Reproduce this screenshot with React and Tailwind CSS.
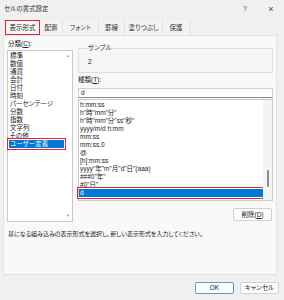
const categories = [
  "標準",
  "数値",
  "通貨",
  "会計",
  "日付",
  "時刻",
  "パーセンテージ",
  "分数",
  "指数",
  "文字列",
  "その他",
  "ユーザー定義",
];

const formats = [
  "h:mm:ss",
  'h"時"mm"分"',
  'h"時"mm"分"ss"秒"',
  "yyyy/m/d h:mm",
  "mm:ss",
  "mm:ss.0",
  "@",
  "[h]:mm:ss",
  'yyyy"年"m"月"d"日"(aaa)',
  '###0"年"',
  '#0"日"',
  "d",
];

const tabs = [
  { label: "表示形式", w: "w-[35px]" },
  { label: "配置", w: "w-[23px]" },
  { label: "フォント", w: "w-[36px]" },
  { label: "罫線", w: "w-[26px]" },
  { label: "塗りつぶし", w: "w-[38px]" },
  { label: "保護", w: "w-[27px]" },
];

export default function App() {
  return (
    <div className="w-[284px] h-[300px] bg-[#f0f0f0] text-[#1b1b1b] text-[6.5px] font-['Liberation_Sans','Noto_Sans_CJK_JP',sans-serif] [font-feature-settings:'palt'] flex flex-col overflow-hidden">
      {/* title bar */}
      <div className="h-[18px] flex items-center">
        <span className="pl-[4px] flex-1 text-[#333]">セルの書式設定</span>
        <span className="w-[26px] text-center text-[7px] text-[#444]">?</span>
        <span className="w-[26px] text-center text-[9px] leading-none text-[#444]">×</span>
      </div>

      {/* tabs */}
      <div className="mt-[2px] h-[15px] flex pl-[5px]">
        {tabs.map((t, i) =>
          i === 0 ? (
            <div
              key={t.label}
              className={`${t.w} h-[15px] flex items-center justify-center bg-[#f9f9f9] border-[1.5px] border-[#e4232f]`}
            >
              {t.label}
            </div>
          ) : (
            <div
              key={t.label}
              className={`${t.w} h-[15px] flex items-center justify-center bg-[#f3f3f3] border-r border-[#e4e4e4] text-[#333]`}
            >
              {t.label}
            </div>
          )
        )}
      </div>

      {/* panel */}
      <div className="ml-[3px] w-[274px] h-[240px] bg-[#f9f9f9] border border-[#e2e2e2] px-[3px] flex flex-col">
        <div className="flex gap-[5px] pt-[3px]">
          {/* left column */}
          <div className="w-[66px] flex flex-col">
            <div className="h-[10px] leading-[10px] pl-[1px]">
              分類(<span className="underline">C</span>):
            </div>
            <div className="mt-[1px] h-[172px] bg-white border border-[#c9c9c9] flex">
              <div className="flex-1 pt-[1px] pl-[1px]">
                {categories.map((c) =>
                  c === "ユーザー定義" ? (
                    <div
                      key={c}
                      className="h-[8px] leading-[8px] pl-[1px] bg-[#0078d7] text-white outline-[1.5px] outline-solid outline-[#e4232f] outline-offset-[1px]"
                    >
                      {c}
                    </div>
                  ) : (
                    <div key={c} className="h-[8px] leading-[8px] pl-[1px]">
                      {c}
                    </div>
                  )
                )}
              </div>
              <div className="w-[8px] flex flex-col justify-between items-center py-[2px] text-[4px] text-[#9a9a9a]">
                <span>▲</span>
                <span>▼</span>
              </div>
            </div>
          </div>

          {/* right column */}
          <div className="flex-1 flex flex-col">
            <fieldset className="mt-[5px] h-[29px] border border-[#dedede] bg-[#f5f5f5] pl-[9px]">
              <legend className="leading-[8px] px-0 text-[#333]">サンプル</legend>
              <div className="mt-[6px] leading-[8px]">2</div>
            </fieldset>
            <div className="mt-[2px] h-[10px] leading-[10px]">
              種類(<span className="underline">T</span>):
            </div>
            <div className="mt-[3px] h-[10px] bg-white border border-[#d0d0d0] border-b-[#8a8a8a] pl-[2px] leading-[8px]">
              d
            </div>
            <div className="mt-[1px] h-[102px] bg-white border border-[#c9c9c9] flex">
              <div className="flex-1 pt-[1px]">
                {formats.map((f) =>
                  f === "d" ? (
                    <div
                      key={f}
                      className="h-[8px] leading-[8px] pl-[1px] bg-[#0078d7] text-white outline-[1.5px] outline-solid outline-[#e4232f] outline-offset-[1.5px]"
                    >
                      {f}
                    </div>
                  ) : (
                    <div key={f} className="h-[8px] leading-[8px] pl-[1px]">
                      {f}
                    </div>
                  )
                )}
              </div>
              <div className="w-[9px] bg-[#f4f4f4] flex justify-center pt-[70px]">
                <div className="w-[2px] h-[17px] rounded-full bg-[#8a8a8a]" />
              </div>
            </div>
            <div className="mt-[7px] flex justify-end pr-[1px]">
              <div className="w-[39px] h-[13px] bg-[#fdfdfd] border border-[#d0d0d0] rounded-[2px] flex items-center justify-center">
                削除(<span className="underline">D</span>)
              </div>
            </div>
          </div>
        </div>

        <p className="mt-[7px] h-[10px] leading-[10px] pl-[1px] text-[6px]">
          基になる組み込みの表示形式を選択し、新しい表示形式を入力してください。
        </p>
      </div>

      {/* buttons */}
      <div className="mt-[7px] flex justify-end gap-[6px] pr-[5px]">
        <div className="w-[39px] h-[12px] bg-[#fdfdfd] border border-[#5b9bd5] rounded-[2px] flex items-center justify-center">
          OK
        </div>
        <div className="w-[39px] h-[12px] bg-[#fdfdfd] border border-[#d0d0d0] rounded-[2px] flex items-center justify-center">
          キャンセル
        </div>
      </div>
    </div>
  );
}
